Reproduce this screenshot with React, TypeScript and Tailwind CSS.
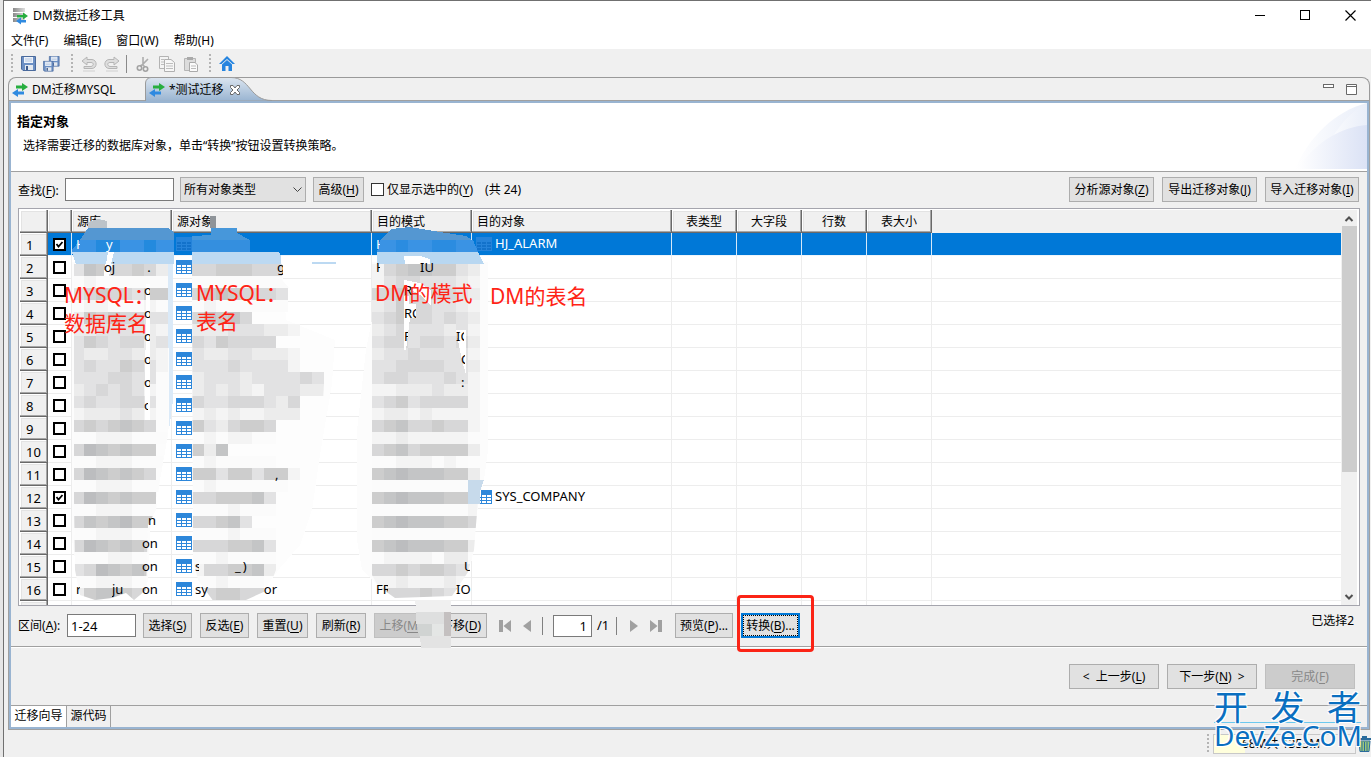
import React from "react";

const SHADES: Record<string, string> = {
  a: "#bcbdbf",
  b: "#c4c5c6",
  c: "#cdcdcd",
  d: "#d7d7d8",
  e: "#e2e2e3",
  f: "#ececec",
  g: "#f4f4f4",
  h: "#fbfbfb",
};

const CELL = 12;

const MASK_SOURCE_DB = [
  "ebcddcdf", "hghhhhhh", "edcddecc", "hgghhhgh", "fcdcddee", "ffeeeefg", "ecdeddfe", "effeeffg",
  "edeecdeg", "eeeddeeh", "fededegh", "edeeddeh", "gfffefgh", "dcdcbcd", "hhggghhh", "dabcbcc",
  "hhggghhh", "dabcbcd", "hhggghhh", "dabcbcc", "hhggghhh", "dbcbacc", "hhggghh", "dabcbcd",
  "hhhgghh", "edabcbc", "hhggghh", "fcbbcdc",
];

const MASK_SOURCE_OBJ = [
  "ddcccddde", "hhhhhhhhh", "dcbcddde", "hghhhhhh", "dbcbd", "fffeeeffg", "decdddd", "effeefffg",
  "eeedeeeeg", "feeefeeeede", "fefefgeeeff", "deedddefd", "gfgfggfff", "cefdccd", "hghgghh", "cfb",
  "hghhhhh", "ccecceccg", "hghhhhhh", "ddcccbe", "hhhghhh", "ddcbe", "hhhghhh", "dddccbe",
  "hhghhhh", "gddccbf", "hhghhh", "fdccdd",
];

const MASK_TARGET_SCHEMA = [
  "gdcbbccef", "geddeeefg", "ddcdcddef", "fecddeefg", "edcddedef", "fedeeefeg", "eddeddedf", "feedeeeeg",
  "eeddddeef", "eddeeedeg", "ggfffeffg", "edceddddg", "gffgfgggg", "dcbddcddg", "ggfgggggh",
  "dcbdccccf", "hhggghgh", "cbabbbccf", "hhhhhhhhh", "cbabbbccf", "hhhhhhhhg", "cbabbbccd", "hhhhhhhhh",
  "cbabbbccf", "hgggghffh", "ddcdccdef", "ggfgggfgg", "edddcdecf",
];

function Blocks({ rows, x, y }: { rows: string[]; x: number; y: number }) {
  return (
    <>
      {rows.map((row, r) =>
        row.split("").map((shade, c) => (
          <rect key={`${r}-${c}`} x={x + c * CELL} y={y + r * CELL} width={CELL} height={CELL} fill={SHADES[shade]} />
        )),
      )}
    </>
  );
}

function MosaicOverlay() {
  return (
    <svg
      className="pointer-events-none absolute -top-2 left-[42px]"
      width="440"
      height="452"
      viewBox="60 200 440 452"
      shapeRendering="crispEdges"
      aria-hidden="true"
    >
      <defs>
        <clipPath id="clip-db">
          <path d="M74 264H170L168 430L160 480L156 510L148 525L146 590L134 600L126 593L112 598L95 600L80 595L75 570L74 500Z" />
        </clipPath>
        <clipPath id="clip-obj">
          <path d="M192 264H282V280L300 300L330 360L324 384L320 450L312 510L300 545L276 570L268 590L246 600L232 602L214 602L198 580L193 560Z" />
        </clipPath>
        <clipPath id="clip-schema">
          <path d="M372 264H480V480L478 500L474 550L468 572L452 596L395 598L378 586L372 575Z" />
        </clipPath>
      </defs>
      <path d="M72 262H172V390L168 435L160 480L150 530L147 592H80L72 540Z" fill="#fcfcfc" />
      <path d="M192 262H282L286 320L335 340L332 384L320 455L312 510L300 545L280 568L262 592H204L193 560Z" fill="#fdfdfd" />
      <path d="M372 262H488V450L484 480L478 505L472 560L455 592H385L362 570L357 540V430L366 350L372 320Z" fill="#fcfcfc" />
      <g clipPath="url(#clip-db)"><Blocks rows={MASK_SOURCE_DB} x={72} y={264} /></g>
      <g clipPath="url(#clip-obj)"><Blocks rows={MASK_SOURCE_OBJ} x={192} y={264} /></g>
      <g clipPath="url(#clip-schema)"><Blocks rows={MASK_TARGET_SCHEMA} x={372} y={264} /></g>

      <path d="M146 284H150V420H145Z" fill="#ffffff" />
      <path d="M168 264H173V400L169 430Z" fill="#dbeaf8" />
      <path d="M105 264H113L109 276L104 276Z" fill="#ffffff" />
      <path d="M404 280L420 283L431 290V306L422 296L404 286Z" fill="#ffffff" />
      <path d="M404 296H409V304H416V318H410L406 350H404Z" fill="#ffffff" />
      <path d="M456 330H466V375L462 360Z" fill="#ffffff" />

      <path d="M88 228V222L98 219L107 221V228Z" fill="#bcc3c9" />
      <path d="M210 216H216V228H210Z" fill="#8f9499" />
      <path d="M88 228H168L174 232V240H80Z" fill="#5497d2" />
      <path d="M80 240H174V252H72V250Z" fill="#3a93e4" />
      <path d="M96 240H120V252H96ZM144 240H156V252H144Z" fill="#238ade" />
      <path d="M72 252H174V264H76Z" fill="#bcd9f2" />
      <path d="M108 252H114L111 264H106Z" fill="#ffffff" />
      <path d="M211 228H237V233L250 240V252H192V236L211 235Z" fill="#4797da" />
      <path d="M192 240H250V252H192Z" fill="#348fdf" />
      <path d="M192 252H279L281 256V264H192Z" fill="#bcd9f2" />
      <path d="M391 229L410 227L440 232L466 236L472 240H380Z" fill="#5497d2" />
      <path d="M380 240H473L478 252H377Z" fill="#3a93e4" />
      <path d="M396 240H408V252H396ZM432 240H456V252H432Z" fill="#2b8ce0" />
      <path d="M377 252H478L484 264H377Z" fill="#b8d7f1" />
      <path d="M404 256H420L430 259V264H405Z" fill="#ffffff" />
      <path d="M312 262H336V264H312Z" fill="#bcd9f2" />
      <path d="M468 480H484L480 492V504H468Z" fill="#c7daeb" />

      <path d="M415 600H451V648H421L419 630Z" fill="#f0f0f0" />
      <path d="M416 612H451V624H416Z" fill="#dedfdf" />
      <path d="M444 612H451V636H444Z" fill="#c4c0c0" />
      <path d="M417 624H432V636H419Z" fill="#d0d3d2" />
      <path d="M432 624H444V636H432Z" fill="#e4e6e5" />
      <path d="M420 636H451V648H421Z" fill="#e3e3e3" />
    </svg>
  );
}

function TableIcon({ dim = false }: { dim?: boolean }) {
  const fill = dim ? "#2583da" : "#2d87da";
  const line = dim ? "#1272cb" : "#ffffff";
  return (
    <svg className="shrink-0" width="16" height="14" viewBox="0 0 16 14" shapeRendering="crispEdges" aria-hidden="true">
      <rect width="16" height="14" fill={fill} />
      <path d="M1 5h4v2H1zM6 5h4v2H6zM11 5h4v2h-4zM1 8h4v2H1zM6 8h4v2H6zM11 8h4v2h-4zM1 11h4v2H1zM6 11h4v2H6zM11 11h4v2h-4z" fill={line} />
    </svg>
  );
}

function SwapIcon() {
  return (
    <svg width="16" height="14" viewBox="0 0 16 14" aria-hidden="true">
      <path d="M4 2.5H10V0L16 4L10 8V5.5H4Z" fill="#27ae3f" />
      <path d="M12 8.5H6V6L0 10L6 14V11.5H12Z" fill="#2f8ae0" />
    </svg>
  );
}

function FloppyShape() {
  return (
    <>
      <path d="M.5 .5H14.500V14.500H2L.5 13Z" fill="#6b8fc4" stroke="#4a6a9c" />
      <rect x="3" y="1" width="9" height="6" fill="#eef3fa" />
      <path d="M4 3H11M4 5H11" stroke="#b4c6e0" />
      <rect x="4" y="9" width="8" height="5" fill="#e4e9ef" />
      <rect x="5" y="10" width="2" height="4" fill="#3c5a8c" />
    </>
  );
}

function Grip() {
  return <span className="block h-5 w-0.5 bg-[repeating-linear-gradient(to_bottom,#b4b4b4_0_2px,transparent_2px_4px)]" />;
}

function ToolButton({ label, children, disabled }: { label: string; children: React.ReactNode; disabled?: boolean }) {
  return (
    <button aria-label={label} disabled={disabled} className="flex size-5 items-center justify-center">
      {children}
    </button>
  );
}

function Key({ k }: { k: string }) {
  return (
    <>
      (<span className="underline underline-offset-2">{k}</span>)
    </>
  );
}

function PushButton({
  className = "",
  disabled,
  children,
}: {
  className?: string;
  disabled?: boolean;
  children: React.ReactNode;
}) {
  return (
    <button
      disabled={disabled}
      className={`h-[25px] shrink-0 whitespace-nowrap border border-[#adadad] bg-[#e1e1e1] text-center leading-5 disabled:border-[#bfbfbf] disabled:bg-[#cccccc] disabled:text-[#888888] ${className}`}
    >
      {children}
    </button>
  );
}

type Part = [string, string];
type Row = { checked?: boolean; db?: Part[]; obj?: Part[]; schema?: Part[]; target?: string };

const CUT_ON: Part[] = [["ml-[72px] w-1.5 overflow-hidden", "on"]];

const ROWS: Row[] = [
  { checked: true, db: [["ml-1 w-1 overflow-hidden", "H"], ["ml-[26px]", "y"]], schema: [["ml-1 w-1 overflow-hidden", "H"]], target: "HJ_ALARM" },
  { db: [["ml-8", "oj"], ["ml-8", "."]], obj: [["ml-[82px] w-1.5 overflow-hidden", "g"]], schema: [["ml-1 w-1 overflow-hidden", "H"], ["ml-10", "IU"]] },
  { db: CUT_ON, schema: [["ml-8 w-2 overflow-hidden", "R"]] },
  { db: CUT_ON, schema: [["ml-8 w-3 overflow-hidden", "RC"]] },
  { db: CUT_ON, schema: [["ml-8 w-1 overflow-hidden", "R"], ["ml-12 w-2 overflow-hidden", "IC"]] },
  { db: CUT_ON, schema: [["ml-[89px] w-1 overflow-hidden", "C"]] },
  { db: CUT_ON, schema: [["ml-[89px] w-1 overflow-hidden", ":"]] },
  { db: [["ml-[72px] w-1 overflow-hidden", "o"]] },
  {},
  {},
  { obj: [["ml-20", ","]] },
  { checked: true, target: "SYS_COMPANY" },
  { db: [["ml-[76px]", "n"]] },
  { db: [["ml-[70px]", "on"]] },
  { db: [["ml-[70px]", "on"]], obj: [["w-1 overflow-hidden", "s"], ["ml-9", "_"], ["ml-0.5", ")"]], schema: [["ml-[92px] w-1.5 overflow-hidden", "U"]] },
  { db: [["ml-1 w-1 overflow-hidden", "r"], ["ml-8 w-3 overflow-hidden", "jur"], ["ml-[18px]", "on"]], obj: [["", "sy"], ["ml-14", "or"]], schema: [["ml-1 w-3 overflow-hidden", "FR"], ["ml-[68px]", "IO"]] },
  {},
];

function Fragments({ parts }: { parts?: Part[] }) {
  return (
    <>
      {parts?.map(([cls, text], i) => (
        <span key={i} className={`relative z-10 h-[18px] shrink-0 leading-[18px] ${cls}`}>
          {text}
        </span>
      ))}
    </>
  );
}

function ObjectCheckbox({ label, checked }: { label: string; checked?: boolean }) {
  return (
    <span className="relative mx-auto block size-[13px]">
      <input
        type="checkbox"
        aria-label={label}
        defaultChecked={checked}
        className="peer block size-[13px] appearance-none border-2 border-black bg-white"
      />
      <svg className="pointer-events-none absolute inset-0 hidden peer-checked:block" width="13" height="13" viewBox="0 0 13 13" aria-hidden="true">
        <path d="M3.500 6L5.500 8.500L9.500 4" fill="none" stroke="#000" strokeWidth="1.800" />
      </svg>
    </span>
  );
}

const RAISED = "bg-[#f0f0f0] shadow-[inset_-1px_-1px_0_#696969,inset_-2px_-2px_0_#a6a6a6,inset_1px_1px_0_#ffffff,inset_2px_2px_0_#e3e3e3]";

function ObjectTable() {
  return (
    <table className="w-full table-fixed border-separate border-spacing-0">
      <colgroup>
        <col className="w-7" />
        <col className="w-6" />
        <col className="w-[100px]" />
        <col className="w-[200px]" />
        <col className="w-[100px]" />
        <col className="w-[200px]" />
        <col className="w-[65px]" />
        <col className="w-[65px]" />
        <col className="w-[65px]" />
        <col className="w-[65px]" />
        <col />
      </colgroup>
      <thead>
        <tr className="h-[23px] bg-[#f0f0f0]">
          {["", "", "源库", "源对象", "目的模式", "目的对象"].map((t, i) => (
            <th key={i} scope="col" className={`h-[23px] p-0 pl-[5px] text-left font-normal leading-[22px] ${RAISED}`}>{t}</th>
          ))}
          {["表类型", "大字段", "行数", "表大小"].map((t) => (
            <th key={t} scope="col" className={`h-[23px] p-0 pr-px text-center font-normal leading-[22px] ${RAISED}`}>{t}</th>
          ))}
          <th scope="col" aria-label="空白" className="p-0" />
        </tr>
      </thead>
      <tbody className="text-[13px]">
        {ROWS.map((row, i) => {
          const selected = i === 0;
          const cell = `h-[23px] border-b border-r p-0 ${selected ? "border-b-[#eef5fc] border-r-[#d5e8f8]" : "border-[#ededed]"}`;
          return (
            <tr key={i} className={selected ? "bg-[#0078d7] text-white" : "bg-white"}>
              <th scope="row" className={`h-[23px] p-0 pl-1.5 text-left font-normal leading-[22px] text-black ${RAISED}`}>{i + 1}</th>
              <td className={cell}><ObjectCheckbox label={`选择第 ${i + 1} 行`} checked={row.checked} /></td>
              <td className={cell}>
                <div className="flex h-[22px] items-center"><Fragments parts={row.db} /></div>
              </td>
              <td className={cell}>
                <div className="flex h-[22px] items-center gap-[3px] pl-1">
                  {i < 16 && <TableIcon dim={selected} />}
                  <span className="flex"><Fragments parts={row.obj} /></span>
                </div>
              </td>
              <td className={cell}>
                <div className="flex h-[22px] items-center overflow-hidden"><Fragments parts={row.schema} /></div>
              </td>
              <td className={cell}>
                {row.target && (
                  <div className="flex h-[22px] items-center gap-[3px] pl-1">
                    <TableIcon dim={selected} />
                    <span className="relative z-10">{row.target}</span>
                  </div>
                )}
              </td>
              <td className={cell} />
              <td className={cell} />
              <td className={cell} />
              <td className={cell} />
              <td className={`h-[23px] border-b p-0 ${selected ? "border-b-[#eef5fc]" : "border-[#ededed]"}`} />
            </tr>
          );
        })}
      </tbody>
    </table>
  );
}

function VerticalScrollbar() {
  return (
    <div className="mr-0.5 flex w-4 shrink-0 flex-col items-center bg-[#f0f0f0]" aria-hidden="true">
      <svg width="16" height="16" viewBox="0 0 16 16"><path d="M4.500 11L8 7.500L11.500 11" fill="none" stroke="#505050" strokeWidth="2" /></svg>
      <div className="h-[246px] w-[15px] bg-[#cdcdcd]" />
      <svg className="mt-auto" width="16" height="17" viewBox="0 0 16 17"><path d="M4.500 7L8 10.500L11.500 7" fill="none" stroke="#505050" strokeWidth="2" /></svg>
    </div>
  );
}

function TitleBar() {
  return (
    <header className="flex h-[29px] shrink-0 items-center bg-white pl-2">
      <svg width="16" height="18" viewBox="0 0 16 18" aria-hidden="true">
        <defs>
          <linearGradient id="server" x1="0" x2="1"><stop offset="0" stopColor="#8a8a8a" /><stop offset="1" stopColor="#dedede" /></linearGradient>
        </defs>
        <path d="M1 1h12v4H1zM1 6h12v4H1zM1 11h12v4H1z" fill="url(#server)" />
        <path d="M5 8H11V5.500L16 9L11 12.500V10.500H5Z" fill="#27ae3f" />
        <path d="M14 13H9V10.500L4 14L9 17.500V15.500H14Z" fill="#2f8ae0" />
      </svg>
      <h1 className="ml-[5px] grow">DM数据迁移工具</h1>
      <div className="flex items-center gap-[25px] pr-[11px]">
        <button aria-label="最小化" className="flex size-5 items-center justify-center"><svg width="11" height="11" viewBox="0 0 11 11"><path d="M0 5.500H10" stroke="#000" /></svg></button>
        <button aria-label="最大化" className="flex size-5 items-center justify-center"><svg width="11" height="11" viewBox="0 0 11 11"><rect x=".5" y=".5" width="9" height="9" fill="none" stroke="#000" /></svg></button>
        <button aria-label="关闭" className="flex size-5 items-center justify-center"><svg width="11" height="11" viewBox="0 0 11 11"><path d="M.5 .5L10.500 10.500M10.500 .5L.5 10.500" stroke="#000" strokeWidth="1.200" /></svg></button>
      </div>
    </header>
  );
}

function Toolbar() {
  return (
    <div className="flex h-[27px] shrink-0 items-center pl-[7px] pt-0.5">
      <Grip />
      <span className="ml-[5px] flex gap-[3px]">
        <ToolButton label="保存"><svg width="15" height="15" viewBox="0 0 15 15"><FloppyShape /></svg></ToolButton>
        <ToolButton label="全部保存">
          <svg width="17" height="16" viewBox="0 0 17 16">
            <g transform="translate(6 0) scale(.7)"><FloppyShape /></g>
            <g transform="translate(0 5) scale(.7)"><FloppyShape /></g>
          </svg>
        </ToolButton>
      </span>
      <span className="ml-2.5"><Grip /></span>
      <span className="ml-1.5 flex gap-[3px]">
        <ToolButton label="撤销" disabled>
          <svg width="16" height="16" viewBox="0 0 16 16"><path d="M1 5L6 1V3.500H11C16.500 4 16.500 12 11 12.500H3V10.500H10C13 10 13 6.500 10 6.500H6V9Z" fill="#dedede" stroke="#b5b5b5" /><path d="M2 15H14" stroke="#d0d0d0" /></svg>
        </ToolButton>
        <ToolButton label="重做" disabled>
          <svg width="16" height="16" viewBox="0 0 16 16"><path d="M15 5L10 1V3.500H5C-.5 4-.5 12 5 12.500H13V10.500H6C3 10 3 6.500 6 6.500H10V9Z" fill="#dedede" stroke="#b5b5b5" /><path d="M2 15H14" stroke="#d0d0d0" /></svg>
        </ToolButton>
      </span>
      <span className="ml-1 h-[18px] w-px bg-[#8a8a8a]" />
      <span className="ml-1.5 flex gap-1">
        <ToolButton label="剪切" disabled>
          <svg width="14" height="16" viewBox="0 0 14 16" fill="none"><path d="M7 1V9L9 11M12 3L6 9L4 10" stroke="#adadad" strokeWidth="1.600" /><circle cx="3.500" cy="12" r="2.200" stroke="#a2a2a2" strokeWidth="1.600" /><circle cx="9.500" cy="13" r="2.200" stroke="#a2a2a2" strokeWidth="1.600" /></svg>
        </ToolButton>
        <ToolButton label="复制" disabled>
          <svg width="16" height="16" viewBox="0 0 16 16"><path d="M.5 .5H9.500V12.500H.5Z" fill="#f4f4f4" stroke="#b3b3b3" /><path d="M5.500 3.500H12L15.500 6.500V15.500H5.500Z" fill="#f7f7f7" stroke="#b0b0b0" /><path d="M2 3.500H5M2 6H5M2 8.500H5M7 7.500H14M7 10H14M7 12.500H14" stroke="#bdbdbd" /></svg>
        </ToolButton>
        <ToolButton label="粘贴" disabled>
          <svg width="14" height="16" viewBox="0 0 14 16"><path d="M.5 2.500H11.500V14.500H.5Z" fill="#dcdcdc" stroke="#b5b5b5" /><rect x="3" y="1" width="6" height="3" fill="#a9a9a9" /><path d="M5.500 6.500H11L13.500 9V15.500H5.500Z" fill="#fafafa" stroke="#aaa" /><path d="M7 10H12M7 12.500H12" stroke="#bbb" /></svg>
        </ToolButton>
      </span>
      <span className="ml-2"><Grip /></span>
      <span className="ml-1.5">
        <ToolButton label="主页">
          <svg width="16" height="15" viewBox="0 0 16 15"><path d="M8 0L16 8H13.500L8 3L2.500 8H0Z" fill="#2584df" /><path d="M8 4L13 8.500V15H9.500V10H6.500V15H3V8.500Z" fill="#2584df" /></svg>
        </ToolButton>
      </span>
    </div>
  );
}

function EditorTabs() {
  return (
    <div className="flex h-[23px] shrink-0 items-center rounded-t-lg border border-b-0 border-[#9a9a9a]">
      <button className="flex h-full w-[136px] shrink-0 items-center gap-1 pl-[3px] pt-px"><SwapIcon />DM迁移MYSQL</button>
      <div className="relative flex h-full w-32 shrink-0 items-center pt-px">
        <svg className="absolute -top-px left-0" width="128" height="24" viewBox="0 0 128 24" aria-hidden="true">
          <defs>
            <linearGradient id="tab" x1="0" y1="0" x2="0" y2="1"><stop offset="0" stopColor="#dbe5f0" /><stop offset="1" stopColor="#99b4d1" /></linearGradient>
          </defs>
          <path d="M.5 24V6C.5 3 3 .5 6 .5H86C106 .5 104 23.500 127 23.500" fill="url(#tab)" stroke="#9a9a9a" />
        </svg>
        <button className="relative flex items-center gap-1 pl-1"><SwapIcon />*测试迁移</button>
        <button aria-label="关闭标签" className="relative ml-1.5">
          <svg width="10" height="10" viewBox="0 0 10 10"><path d="M.5 .5H3L5 3L7 .5H9.500V2.500L7 5L9.500 7.500V9.500H7L5 7L3 9.500H.5V7.500L3 5L.5 2.500Z" fill="#fff" stroke="#696969" /></svg>
        </button>
      </div>
      <div className="ml-auto flex items-center gap-3 pr-3">
        <button aria-label="最小化视图"><svg width="11" height="11" viewBox="0 0 11 11"><rect x=".5" y=".5" width="10" height="3" fill="#fff" stroke="#696969" /></svg></button>
        <button aria-label="最大化视图"><svg width="11" height="11" viewBox="0 0 11 11"><path d="M.5 .5H10.500V10.500H.5ZM.5 2.500H10.500" fill="#fff" stroke="#696969" /></svg></button>
      </div>
    </div>
  );
}

function WizardHeader() {
  return (
    <section className="relative h-[69px] shrink-0 border-b border-[#a0a0a0] bg-white">
      <svg className="absolute right-0 top-0" width="76" height="66" viewBox="0 0 76 66" aria-hidden="true">
        <defs>
          <linearGradient id="wave" x1="0" x2="1"><stop offset="0" stopColor="#fff" /><stop offset="1" stopColor="#dbe2f5" /></linearGradient>
          <linearGradient id="wave-light" x1="0" x2="1"><stop offset="0" stopColor="#fff" /><stop offset="1" stopColor="#e9eef9" /></linearGradient>
        </defs>
        <path d="M4 66C18 34 44 8 76 0V66Z" fill="url(#wave-light)" />
        <path d="M36 44C46 24 60 8 76 0V66H30Z" fill="url(#wave-light)" />
        <path d="M6 66C26 38 50 24 76 22V66Z" fill="url(#wave)" />
      </svg>
      <h2 className="pl-1.5 pt-[9px] text-[13px] font-bold leading-[18px]">指定对象</h2>
      <p className="pl-3 pt-[7px] leading-[18px]">选择需要迁移的数据库对象，单击“转换”按钮设置转换策略。</p>
    </section>
  );
}

function FilterBar() {
  return (
    <div className="flex shrink-0 items-center pb-1.5 pl-[7px] pr-2 pt-[5px]">
      <label htmlFor="search" className="w-[47px] shrink-0 pt-[3px]">查找<Key k="F" />:</label>
      <input id="search" type="text" className="h-[23px] w-[109px] border border-[#7a7a7a] bg-white px-1 outline-none" />
      <div className="relative ml-1.5">
        <select aria-label="对象类型" className="block h-[25px] w-[126px] appearance-none border border-[#adadad] bg-[#e1e1e1] pl-[3px] outline-none">
          <option>所有对象类型</option>
        </select>
        <svg className="pointer-events-none absolute right-1 top-2" width="9" height="9" viewBox="0 0 9 9" aria-hidden="true"><path d="M.5 2.500L4.500 6.500L8.500 2.500" fill="none" stroke="#444" /></svg>
      </div>
      <PushButton className="ml-[7px] w-[51px]">高级<Key k="H" /></PushButton>
      <input id="only-selected" type="checkbox" className="ml-[7px] size-[13px] shrink-0 appearance-none border border-[#333333] bg-white" />
      <label htmlFor="only-selected" className="ml-[3px] whitespace-nowrap">仅显示选中的<Key k="Y" /></label>
      <span className="ml-3 whitespace-nowrap">(共 24)</span>
      <div className="ml-auto flex gap-2">
        <PushButton className="w-[85px]">分析源对象<Key k="Z" /></PushButton>
        <PushButton className="w-[95px]">导出迁移对象<Key k="J" /></PushButton>
        <PushButton className="w-[94px]">导入迁移对象<Key k="I" /></PushButton>
      </div>
    </div>
  );
}

function ActionBar() {
  return (
    <div className="flex shrink-0 items-center border-b border-[#a0a0a0] pb-2 pl-[7px] pr-[13px] pt-[7px]">
      <label htmlFor="range" className="w-[49px] shrink-0">区间<Key k="A" />:</label>
      <input id="range" type="text" defaultValue="1-24" className="h-[23px] w-[69px] border border-[#7a7a7a] bg-white px-[3px] text-[13px] outline-none" />
      <div className="ml-[7px] flex gap-2">
        <PushButton className="w-[49px]">选择<Key k="S" /></PushButton>
        <PushButton className="w-[49px]">反选<Key k="E" /></PushButton>
        <PushButton className="w-[51px]">重置<Key k="U" /></PushButton>
        <PushButton className="w-[50px]">刷新<Key k="R" /></PushButton>
        <PushButton className="w-[53px]" disabled>上移<Key k="M" /></PushButton>
        <PushButton className="w-[52px]">下移<Key k="D" /></PushButton>
      </div>
      <div className="ml-3 flex items-center gap-3">
        <button aria-label="第一页"><svg width="12" height="12" viewBox="0 0 12 12"><path d="M0 0H4V12H0ZM12 0V12L4.500 6Z" fill="#a0a0a0" /></svg></button>
        <button aria-label="上一页"><svg width="8" height="12" viewBox="0 0 8 12"><path d="M8 0V12L0 6Z" fill="#a0a0a0" /></svg></button>
      </div>
      <span className="ml-[11px] h-[18px] w-px bg-[#808080]" />
      <input type="text" aria-label="页码" defaultValue="1" className="ml-2.5 h-[22px] w-[39px] border border-[#7a7a7a] bg-white pr-1 text-right text-[13px] outline-none" />
      <span className="ml-[5px] w-[19px] text-[13px]">/1</span>
      <span className="h-[18px] w-px bg-[#808080]" />
      <div className="ml-[13px] flex items-center gap-3">
        <button aria-label="下一页"><svg width="8" height="12" viewBox="0 0 8 12"><path d="M0 0L8 6L0 12Z" fill="#a0a0a0" /></svg></button>
        <button aria-label="最后一页"><svg width="12" height="12" viewBox="0 0 12 12"><path d="M0 0L7.500 6L0 12ZM8 0H12V12H8Z" fill="#a0a0a0" /></svg></button>
      </div>
      <PushButton className="ml-[13px] w-[58px]">预览<Key k="P" />...</PushButton>
      <div className="relative ml-2">
        <button className="block h-[25px] w-[59px] whitespace-nowrap border-2 border-[#0078d7] bg-[#e1e1e1] outline-dotted outline-1 -outline-offset-3 outline-black">
          转换<Key k="B" />...
        </button>
        <span className="pointer-events-none absolute -left-1 -top-[18px] h-[57px] w-[77px] rounded border-[3px] border-[#fb2416]" />
      </div>
      <span className="ml-auto self-start">已选择2</span>
    </div>
  );
}

function Annotations() {
  const base = "pointer-events-none absolute z-20 whitespace-nowrap text-[21px] leading-7 text-[#ff2416]";
  return (
    <>
      <p className={`${base} left-[46px] top-[73px]`}>MYSQL：<br />数据库名</p>
      <p className={`${base} left-[178px] top-[71px]`}>MYSQL：<br />表名</p>
      <p className={`${base} left-[357px] top-[71px]`}>DM的模式</p>
      <p className={`${base} left-[472px] top-[74px]`}>DM的表名</p>
    </>
  );
}

function Watermark() {
  return (
    <div className="pointer-events-none absolute bottom-2.5 right-2.5 w-[147px] text-[#0a6fc0] [text-shadow:1px_1px_0_#fff,-1px_-1px_0_#fff,1px_-1px_0_#fff,-1px_1px_0_#fff]">
      <div className="flex justify-between text-[34px] leading-[30px]"><span>开</span><span>发</span><span>者</span></div>
      <div className="border-t border-[#6cc8ee] text-center text-[28px] leading-6">DevZe.CoM</div>
    </div>
  );
}

export default function App() {
  return (
    <div className="relative flex h-screen min-h-[600px] overflow-hidden bg-[#f0f0f0] font-['Noto_Sans','Noto_Sans_CJK_SC',sans-serif] text-xs text-black">
      <div className="w-[3px] shrink-0 bg-[#e6e6e6]" />
      <div className="flex min-w-0 grow flex-col border-l border-t border-[#707070]">
        <TitleBar />
        <nav className="flex h-[19px] shrink-0 items-center gap-[15px] bg-white pl-[7px] pt-[3px]">
          <button>文件(F)</button>
          <button>编辑(E)</button>
          <button>窗口(W)</button>
          <button>帮助(H)</button>
        </nav>
        <Toolbar />
        <main className="ml-1 mr-px mt-px flex min-h-0 grow flex-col">
          <EditorTabs />
          <div className="flex min-h-0 grow flex-col border border-[#a0a0a0]">
            <div className="flex min-h-0 grow flex-col border-2 border-[#99b4d1]">
              <WizardHeader />
              <FilterBar />
              <div className="relative ml-[7px] mr-[7px] flex min-h-0 grow flex-col">
                <div className="flex min-h-0 grow overflow-hidden border border-[#a5a5ad] bg-white pl-px pt-px">
                  <div className="min-w-0 grow overflow-hidden"><ObjectTable /></div>
                  <VerticalScrollbar />
                </div>
                <MosaicOverlay />
                <Annotations />
              </div>
              <ActionBar />
              <div className="flex shrink-0 justify-end gap-2 border-t border-white pb-4 pr-3 pt-4">
                <PushButton className="w-[90px]">&lt;&nbsp; 上一步<Key k="L" /></PushButton>
                <PushButton className="w-[90px]">下一步<Key k="N" />&nbsp; &gt;</PushButton>
                <PushButton className="w-[90px]" disabled>完成<Key k="F" /></PushButton>
              </div>
              <div className="flex h-[22px] shrink-0 border-t border-[#a0a0a0]">
                <button className="w-14 border-r border-[#a0a0a0] bg-white pb-0.5">迁移向导</button>
                <button className="w-11 border-r border-[#a0a0a0] pb-0.5">源代码</button>
              </div>
            </div>
          </div>
        </main>
        <footer className="flex h-[27px] shrink-0 items-center justify-end">
          <Grip />
          <span className="ml-1 flex h-5 w-[143px] items-center border border-[#c8c8c8] bg-[linear-gradient(to_right,#ffffdc_31px,transparent_31px)] pl-7">
            68M共 1353M
          </span>
          <button aria-label="回收内存" className="ml-0.5">
            <svg width="13" height="16" viewBox="0 0 13 16"><path d="M0 3H13M4 1H9" stroke="#2b6c9c" strokeWidth="2" /><path d="M1 5H12L11 15.500H2Z" fill="#9cc77a" stroke="#2b6c9c" /><path d="M4 6V15M6.500 6V15M9 6V15" stroke="#2b6c9c" /></svg>
          </button>
        </footer>
      </div>
      <Watermark />
    </div>
  );
}
